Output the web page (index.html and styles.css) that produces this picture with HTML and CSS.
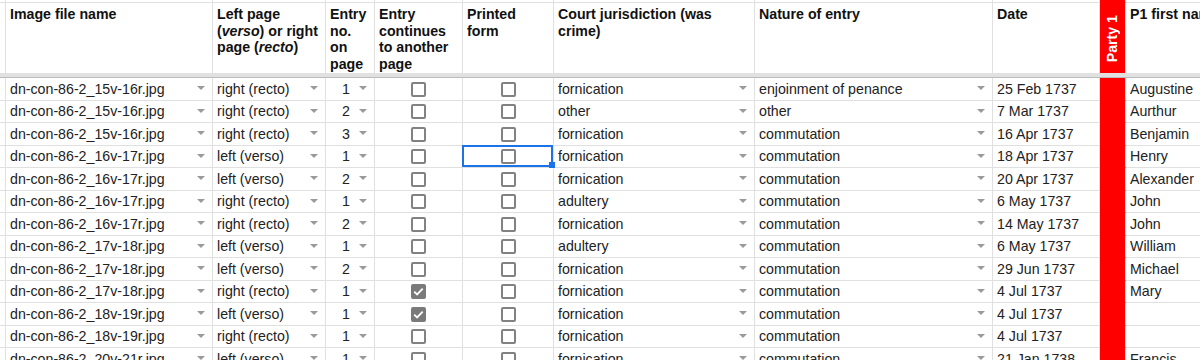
FILE: index.html
```html
<!DOCTYPE html>
<html>
<head>
<meta charset="utf-8">
<link rel="stylesheet" href="styles.css">
</head>
<body>
<div class="sheet">
  <div class="row strip">
    <div class="c g"></div><div class="c"></div><div class="c"></div><div class="c"></div><div class="c"></div><div class="c"></div><div class="c"></div><div class="c"></div><div class="c"></div><div class="c red"></div><div class="c"></div>
  </div>
  <div class="row head">
    <div class="c g"></div>
    <div class="c h">Image file name</div>
    <div class="c h">Left page<br>(<i>verso</i>) or right<br>page (<i>recto</i>)</div>
    <div class="c h">Entry<br>no.<br>on<br>page</div>
    <div class="c h">Entry<br>continues<br>to another<br>page</div>
    <div class="c h">Printed<br>form</div>
    <div class="c h">Court jurisdiction (was<br>crime)</div>
    <div class="c h">Nature of entry</div>
    <div class="c h">Date</div>
    <div class="c red party"><span class="vt">Party 1</span></div>
    <div class="c h">P1 first name</div>
  </div>
  <div class="freeze"></div>

  <div class="row">
    <div class="c g"></div>
    <div class="c dd"><span>dn-con-86-2_15v-16r.jpg</span><i class="ar"></i></div>
    <div class="c dd"><span>right (recto)</span><i class="ar"></i></div>
    <div class="c num"><span>1</span><i class="ar"></i></div>
    <div class="c cb"><i class="box"></i></div>
    <div class="c cb"><i class="box"></i></div>
    <div class="c dd"><span>fornication</span><i class="ar"></i></div>
    <div class="c dd"><span>enjoinment of penance</span><i class="ar"></i></div>
    <div class="c">25 Feb 1737</div>
    <div class="c red"></div>
    <div class="c">Augustine</div>
  </div>
  <div class="row">
    <div class="c g"></div>
    <div class="c dd"><span>dn-con-86-2_15v-16r.jpg</span><i class="ar"></i></div>
    <div class="c dd"><span>right (recto)</span><i class="ar"></i></div>
    <div class="c num"><span>2</span><i class="ar"></i></div>
    <div class="c cb"><i class="box"></i></div>
    <div class="c cb"><i class="box"></i></div>
    <div class="c dd"><span>other</span><i class="ar"></i></div>
    <div class="c dd"><span>other</span><i class="ar"></i></div>
    <div class="c">7 Mar 1737</div>
    <div class="c red"></div>
    <div class="c">Aurthur</div>
  </div>
  <div class="row">
    <div class="c g"></div>
    <div class="c dd"><span>dn-con-86-2_15v-16r.jpg</span><i class="ar"></i></div>
    <div class="c dd"><span>right (recto)</span><i class="ar"></i></div>
    <div class="c num"><span>3</span><i class="ar"></i></div>
    <div class="c cb"><i class="box"></i></div>
    <div class="c cb"><i class="box"></i></div>
    <div class="c dd"><span>fornication</span><i class="ar"></i></div>
    <div class="c dd"><span>commutation</span><i class="ar"></i></div>
    <div class="c">16 Apr 1737</div>
    <div class="c red"></div>
    <div class="c">Benjamin</div>
  </div>
  <div class="row">
    <div class="c g"></div>
    <div class="c dd"><span>dn-con-86-2_16v-17r.jpg</span><i class="ar"></i></div>
    <div class="c dd"><span>left (verso)</span><i class="ar"></i></div>
    <div class="c num"><span>1</span><i class="ar"></i></div>
    <div class="c cb"><i class="box"></i></div>
    <div class="c cb sel"><i class="box"></i><b class="selbox"></b><b class="handle"></b></div>
    <div class="c dd"><span>fornication</span><i class="ar"></i></div>
    <div class="c dd"><span>commutation</span><i class="ar"></i></div>
    <div class="c">18 Apr 1737</div>
    <div class="c red"></div>
    <div class="c">Henry</div>
  </div>
  <div class="row">
    <div class="c g"></div>
    <div class="c dd"><span>dn-con-86-2_16v-17r.jpg</span><i class="ar"></i></div>
    <div class="c dd"><span>left (verso)</span><i class="ar"></i></div>
    <div class="c num"><span>2</span><i class="ar"></i></div>
    <div class="c cb"><i class="box"></i></div>
    <div class="c cb"><i class="box"></i></div>
    <div class="c dd"><span>fornication</span><i class="ar"></i></div>
    <div class="c dd"><span>commutation</span><i class="ar"></i></div>
    <div class="c">20 Apr 1737</div>
    <div class="c red"></div>
    <div class="c">Alexander</div>
  </div>
  <div class="row">
    <div class="c g"></div>
    <div class="c dd"><span>dn-con-86-2_16v-17r.jpg</span><i class="ar"></i></div>
    <div class="c dd"><span>right (recto)</span><i class="ar"></i></div>
    <div class="c num"><span>1</span><i class="ar"></i></div>
    <div class="c cb"><i class="box"></i></div>
    <div class="c cb"><i class="box"></i></div>
    <div class="c dd"><span>adultery</span><i class="ar"></i></div>
    <div class="c dd"><span>commutation</span><i class="ar"></i></div>
    <div class="c">6 May 1737</div>
    <div class="c red"></div>
    <div class="c">John</div>
  </div>
  <div class="row">
    <div class="c g"></div>
    <div class="c dd"><span>dn-con-86-2_16v-17r.jpg</span><i class="ar"></i></div>
    <div class="c dd"><span>right (recto)</span><i class="ar"></i></div>
    <div class="c num"><span>2</span><i class="ar"></i></div>
    <div class="c cb"><i class="box"></i></div>
    <div class="c cb"><i class="box"></i></div>
    <div class="c dd"><span>fornication</span><i class="ar"></i></div>
    <div class="c dd"><span>commutation</span><i class="ar"></i></div>
    <div class="c">14 May 1737</div>
    <div class="c red"></div>
    <div class="c">John</div>
  </div>
  <div class="row">
    <div class="c g"></div>
    <div class="c dd"><span>dn-con-86-2_17v-18r.jpg</span><i class="ar"></i></div>
    <div class="c dd"><span>left (verso)</span><i class="ar"></i></div>
    <div class="c num"><span>1</span><i class="ar"></i></div>
    <div class="c cb"><i class="box"></i></div>
    <div class="c cb"><i class="box"></i></div>
    <div class="c dd"><span>adultery</span><i class="ar"></i></div>
    <div class="c dd"><span>commutation</span><i class="ar"></i></div>
    <div class="c">6 May 1737</div>
    <div class="c red"></div>
    <div class="c">William</div>
  </div>
  <div class="row">
    <div class="c g"></div>
    <div class="c dd"><span>dn-con-86-2_17v-18r.jpg</span><i class="ar"></i></div>
    <div class="c dd"><span>left (verso)</span><i class="ar"></i></div>
    <div class="c num"><span>2</span><i class="ar"></i></div>
    <div class="c cb"><i class="box"></i></div>
    <div class="c cb"><i class="box"></i></div>
    <div class="c dd"><span>fornication</span><i class="ar"></i></div>
    <div class="c dd"><span>commutation</span><i class="ar"></i></div>
    <div class="c">29 Jun 1737</div>
    <div class="c red"></div>
    <div class="c">Michael</div>
  </div>
  <div class="row">
    <div class="c g"></div>
    <div class="c dd"><span>dn-con-86-2_17v-18r.jpg</span><i class="ar"></i></div>
    <div class="c dd"><span>right (recto)</span><i class="ar"></i></div>
    <div class="c num"><span>1</span><i class="ar"></i></div>
    <div class="c cb"><i class="box on"><svg viewBox="0 0 15 15"><path d="M3.2 7.6l2.9 2.8 5.6-5.8"/></svg></i></div>
    <div class="c cb"><i class="box"></i></div>
    <div class="c dd"><span>fornication</span><i class="ar"></i></div>
    <div class="c dd"><span>commutation</span><i class="ar"></i></div>
    <div class="c">4 Jul 1737</div>
    <div class="c red"></div>
    <div class="c">Mary</div>
  </div>
  <div class="row">
    <div class="c g"></div>
    <div class="c dd"><span>dn-con-86-2_18v-19r.jpg</span><i class="ar"></i></div>
    <div class="c dd"><span>left (verso)</span><i class="ar"></i></div>
    <div class="c num"><span>1</span><i class="ar"></i></div>
    <div class="c cb"><i class="box on"><svg viewBox="0 0 15 15"><path d="M3.2 7.6l2.9 2.8 5.6-5.8"/></svg></i></div>
    <div class="c cb"><i class="box"></i></div>
    <div class="c dd"><span>fornication</span><i class="ar"></i></div>
    <div class="c dd"><span>commutation</span><i class="ar"></i></div>
    <div class="c">4 Jul 1737</div>
    <div class="c red"></div>
    <div class="c"></div>
  </div>
  <div class="row">
    <div class="c g"></div>
    <div class="c dd"><span>dn-con-86-2_18v-19r.jpg</span><i class="ar"></i></div>
    <div class="c dd"><span>right (recto)</span><i class="ar"></i></div>
    <div class="c num"><span>1</span><i class="ar"></i></div>
    <div class="c cb"><i class="box"></i></div>
    <div class="c cb"><i class="box"></i></div>
    <div class="c dd"><span>fornication</span><i class="ar"></i></div>
    <div class="c dd"><span>commutation</span><i class="ar"></i></div>
    <div class="c">4 Jul 1737</div>
    <div class="c red"></div>
    <div class="c"></div>
  </div>
  <div class="row">
    <div class="c g"></div>
    <div class="c dd"><span>dn-con-86-2_20v-21r.jpg</span><i class="ar"></i></div>
    <div class="c dd"><span>left (verso)</span><i class="ar"></i></div>
    <div class="c num"><span>1</span><i class="ar"></i></div>
    <div class="c cb"><i class="box"></i></div>
    <div class="c cb"><i class="box"></i></div>
    <div class="c dd"><span>fornication</span><i class="ar"></i></div>
    <div class="c dd"><span>commutation</span><i class="ar"></i></div>
    <div class="c">21 Jan 1738</div>
    <div class="c red"></div>
    <div class="c">Francis</div>
  </div>
</div>
</body>
</html>
```

FILE: styles.css
```css
html, body {
  margin: 0;
  padding: 0;
  background: #fff;
  overflow: hidden;
}
body {
  font-family: "Liberation Sans", Arial, sans-serif;
  font-size: 14.2px;
  color: #222;
  width: 1200px;
  height: 360px;
}
.sheet {
  width: 1300px;
}
.row {
  display: grid;
  grid-template-columns: 6px 207px 113px 49px 88px 91px 201px 238px 107px 26px 180px;
  height: 22.5px;
}
.row.strip {
  height: 3px;
}
.row.head {
  height: 70px;
}
.c {
  box-sizing: border-box;
  border-right: 1px solid #e0e0e0;
  border-bottom: 1px solid #e0e0e0;
  display: flex;
  align-items: center;
  padding: 0 4px;
  white-space: nowrap;
  overflow: hidden;
  min-width: 0;
}
.row.head .c {
  border-bottom: 0;
}
.c.g {
  padding: 0;
}
.c.h {
  display: block;
  padding: 3px 4px 0 4px;
  font-weight: bold;
  line-height: 16.6px;
  color: #111;
}
.c.h i {
  font-style: italic;
}
.freeze {
  height: 4px;
  background: #e1e1e1;
  border-bottom: 1px solid #bcbcbc;
}
.dd {
  justify-content: space-between;
  padding-right: 7px;
}
.num {
  justify-content: flex-end;
  gap: 9px;
  padding-right: 7px;
}
.ar {
  flex: none;
  width: 0;
  height: 0;
  border-left: 4px solid transparent;
  border-right: 4px solid transparent;
  border-top: 4px solid #9a9a9a;
  margin-top: -1px;
}
.cb {
  justify-content: center;
}
.box {
  display: block;
  box-sizing: border-box;
  width: 15px;
  height: 15px;
  border: 2px solid #828282;
  border-radius: 2px;
  margin-top: 1px;
}
.box.on {
  background: #7a7a7a;
  border-color: #7a7a7a;
  position: relative;
}
.box svg {
  position: absolute;
  left: -2px;
  top: -2px;
  width: 15px;
  height: 15px;
  fill: none;
  stroke: #fff;
  stroke-width: 1.8;
}
.red {
  background: #ff0000;
  border-bottom-color: #ff0000;
}
.c.party {
  padding: 12px 0 0 0;
  display: flex;
  justify-content: center;
  align-items: flex-start;
}
.vt {
  writing-mode: vertical-rl;
  transform: rotate(180deg);
  color: #fff;
  font-weight: bold;
  line-height: 17px;
}
.sel {
  position: relative;
  overflow: visible;
}
.selbox {
  position: absolute;
  top: -1px;
  left: -1px;
  right: 0;
  bottom: 0;
  border: 2px solid #1a73e8;
}
.handle {
  position: absolute;
  right: -2px;
  bottom: -1px;
  width: 6px;
  height: 6px;
  background: #1a73e8;
  z-index: 2;
}
```
